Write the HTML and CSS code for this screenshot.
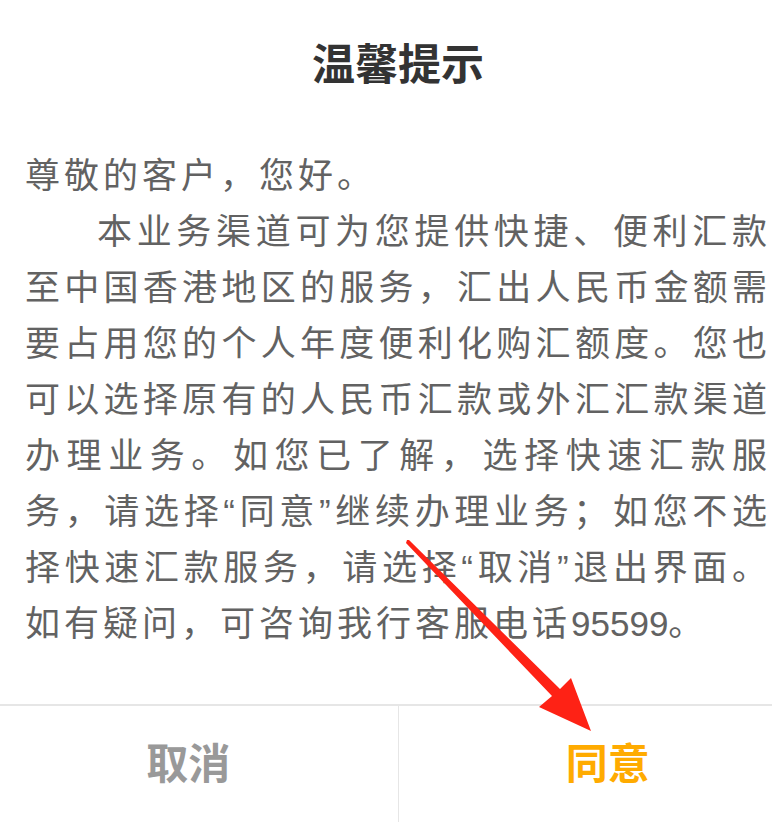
FILE: index.html
```html
<!DOCTYPE html>
<html lang="zh-CN">
<head>
<meta charset="utf-8">
<title>温馨提示</title>
<link rel="stylesheet" href="styles.css">
</head>
<body>
<div class="dialog">
  <div class="title">温馨提示</div>
  <div class="content">
    <p class="greet">尊敬的客户，您好。</p>
    <p class="para">本业务渠道可为您提供快捷、便利汇款至中国香港地区的服务，汇出人民币金额需要占用您的个人年度便利化购汇额度。您也可以选择原有的人民币汇款或外汇汇款渠道办理业务。如您已了解，选择快速汇款服务，请选择“同意”继续办理业务；如您不选择快速汇款服务，请选择“取消”退出界面。如有疑问，可咨询我行客服电话<span class="num">95599</span>。</p>
  </div>
  <div class="actions">
    <div class="btn btn-cancel">取消</div>
    <div class="btn btn-ok">同意</div>
  </div>
</div>
<svg class="arrow" width="772" height="822" viewBox="0 0 772 822">
  <polygon points="407,540 409,540 560,689 571,678 591,731 539,707 552,696 406,543" fill="#fe2215"/>
</svg>
</body>
</html>
```
FILE: styles.css
```css
html, body {
  margin: 0;
  padding: 0;
  background: #fff;
}
body {
  width: 772px;
  height: 822px;
  overflow: hidden;
  position: relative;
  font-family: "Liberation Sans", "Noto Sans CJK SC", sans-serif;
}
.dialog {
  margin-left: -21px;
  width: 838px;
  background: #fff;
}
.title {
  padding-top: 41px;
  line-height: 48px;
  font-size: 43px;
  font-weight: bold;
  color: #333;
  text-align: center;
}
.content {
  padding: 59px 46px 52px;
  font-size: 35px;
  line-height: 56px;
  letter-spacing: 4px;
  color: #626262;
  text-align: justify;
}
.content p {
  margin: 0;
}
.para {
  text-indent: 72px;
}
.num {
  letter-spacing: 0;
}
.actions {
  display: flex;
  border-top: 2px solid #e6e6e6;
}
.btn {
  flex: 1;
  height: 118px;
  line-height: 118px;
  font-size: 42px;
  font-weight: bold;
  text-align: center;
}
.btn-cancel {
  color: #999;
}
.btn-ok {
  color: #ffab00;
  border-left: 1px solid #e6e6e6;
}
.arrow {
  position: absolute;
  left: 0;
  top: 0;
  pointer-events: none;
}
```
